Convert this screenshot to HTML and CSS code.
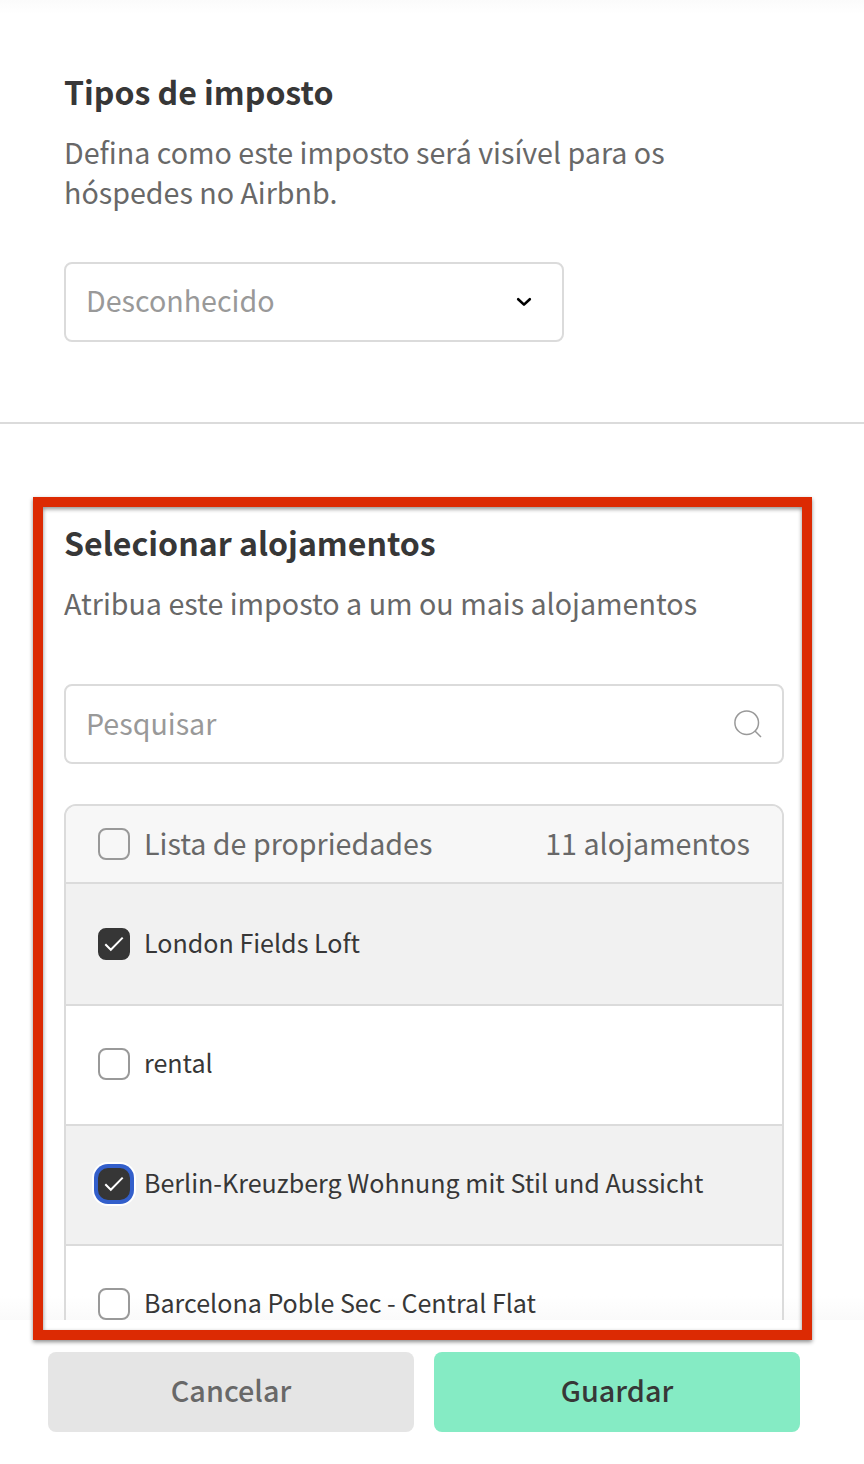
FILE: index.html
```html
<!DOCTYPE html>
<html lang="pt">
<head>
    <meta charset="UTF-8">
    <meta name="viewport" content="width=device-width, initial-scale=1.0">
    <title>Impostos</title>
    <link rel="stylesheet" href="styles.css">
</head>
<body>
    <main class="content">
        <!-- Tax type -->
        <section class="tax-type">
            <h2>Tipos de imposto</h2>
            <p class="description">Defina como este imposto será visível para os hóspedes no Airbnb.</p>
            <div class="field select">
                <span class="label">Desconhecido</span>
                <svg class="chevron" width="16" height="10" viewBox="0 0 16 10">
                    <path d="M2.2 2.2 L8 7.6 L13.8 2.2" fill="none" stroke="#000" stroke-width="2.6" stroke-linecap="round" stroke-linejoin="round"/>
                </svg>
            </div>
        </section>

        <!-- Properties -->
        <section class="properties">
            <h2>Selecionar alojamentos</h2>
            <p class="description">Atribua este imposto a um ou mais alojamentos</p>
            <div class="field search">
                <span class="label">Pesquisar</span>
                <svg width="28" height="28" viewBox="0 0 28 28">
                    <circle cx="12.7" cy="12.7" r="11.8" fill="none" stroke="#999" stroke-width="1.5"/>
                    <path d="M21 21 L27 27" fill="none" stroke="#999" stroke-width="1.5"/>
                </svg>
            </div>

            <div class="list">
                <div class="list-header">
                    <span class="checkbox"></span>
                    <span class="label">Lista de propriedades</span>
                    <span class="label list-count">11 alojamentos</span>
                </div>
                <div class="row selected">
                    <span class="checkbox checked">
                        <svg width="20" height="16" viewBox="0 0 20 16"><path d="M1.3 8.3 L6.8 13.8 L18.7 1.6" fill="none" stroke="#fff" stroke-width="2"/></svg>
                    </span>
                    <span class="label">London Fields Loft</span>
                </div>
                <div class="row">
                    <span class="checkbox"></span>
                    <span class="label">rental</span>
                </div>
                <div class="row selected">
                    <span class="checkbox checked focused">
                        <svg width="20" height="16" viewBox="0 0 20 16"><path d="M1.3 8.3 L6.8 13.8 L18.7 1.6" fill="none" stroke="#fff" stroke-width="2"/></svg>
                    </span>
                    <span class="label">Berlin-Kreuzberg Wohnung mit Stil und Aussicht</span>
                </div>
                <div class="row">
                    <span class="checkbox"></span>
                    <span class="label">Barcelona Poble Sec - Central Flat</span>
                </div>
            </div>
        </section>
    </main>

    <footer class="actions">
        <button class="cancel">Cancelar</button>
        <button class="save">Guardar</button>
    </footer>

    <div class="highlight"></div>
</body>
</html>
```
FILE: styles.css
```css
* {
    box-sizing: border-box;
}
body {
    position: relative;
    display: flex;
    flex-direction: column;
    height: 1464px;
    margin: 0;
    overflow: hidden;
    background: #fff;
    color: #373737;
    font-family: "Noto Sans CJK JP", "Open Sans", sans-serif;
    font-size: 28.65px;
    line-height: 40px;
}
.content {
    height: 1320px;
    overflow: hidden;
    background:
        linear-gradient(#fbfbfb, #fff) top / 100% 14px no-repeat,
        linear-gradient(#fff, #fafafa) bottom / 100% 24px no-repeat;
}
.tax-type {
    height: 424px;
    padding: 70px 64px 0;
    border-bottom: 2px solid #dbdbdb;
}
h2 {
    margin: 0 0 20px;
    font-size: 32.1px;
    line-height: 42px;
    font-weight: 700;
}
.description {
    width: 680px;
    margin: 0;
    color: #686868;
}
.field {
    display: flex;
    align-items: center;
    justify-content: space-between;
    height: 80px;
    padding: 0 20px;
    border: 2px solid #dbdbdb;
    border-radius: 8px;
    background: #fff;
    color: #999;
}
.select {
    width: 500px;
    margin-top: 50px;
    padding-right: 30px;
}
/* the font sits low in its line box */
.label {
    margin-bottom: 4px;
    line-height: 32px;
}
.search .label, .list-header .label {
    margin-bottom: 2px;
}
.properties {
    padding: 97px 80px 0 64px;
}
.search {
    margin: 61px 0 40px;
}
.list {
    border: 2px solid #dbdbdb;
    border-radius: 12px 12px 0 0;
    overflow: hidden;
}
.list-header, .row {
    display: flex;
    align-items: center;
    gap: 14px;
    padding: 0 32px;
    border-bottom: 2px solid #dbdbdb;
}
.list-header {
    height: 78px;
    background: #f7f7f7;
    color: #686868;
}
.list-count {
    margin-left: auto;
}
.row {
    height: 120px;
    padding-bottom: 2px;
    font-size: 25.07px;
}
.list-header + .row {
    height: 122px;
    padding-bottom: 0;
}
.selected {
    background: #f1f1f1;
}
.checkbox {
    display: flex;
    align-items: center;
    justify-content: center;
    flex: none;
    width: 32px;
    height: 32px;
    border: 2px solid #999;
    border-radius: 8px;
    background: #fff;
}
.list-header .checkbox {
    background: none;
}
.checked {
    border-color: #363636;
    background: #363636;
}
.focused {
    border-radius: 10px;
    box-shadow: 0 0 0 4px #335fcb, 0 0 0 6px #fff;
}
.actions {
    display: flex;
    gap: 20px;
    height: 144px;
    padding: 32px 64px 32px 48px;
    background: #fff;
}
.actions button {
    flex: 1;
    height: 80px;
    padding: 0 0 4px;
    border: none;
    border-radius: 8px;
    font: inherit;
    font-size: 28.8px;
    font-weight: 500;
}
.actions .cancel {
    background: #e5e5e5;
    color: #686868;
}
.actions .save {
    background: #85ebc4;
    color: #373737;
}
/* Red callout drawn over the properties section */
.highlight {
    position: absolute;
    top: 497px;
    left: 33px;
    width: 779px;
    height: 843px;
    border: 10px solid #dc2a03;
    box-shadow: 0 2px 4px rgba(0, 0, 0, 0.45), inset 0 2px 4px rgba(0, 0, 0, 0.45);
}
```
